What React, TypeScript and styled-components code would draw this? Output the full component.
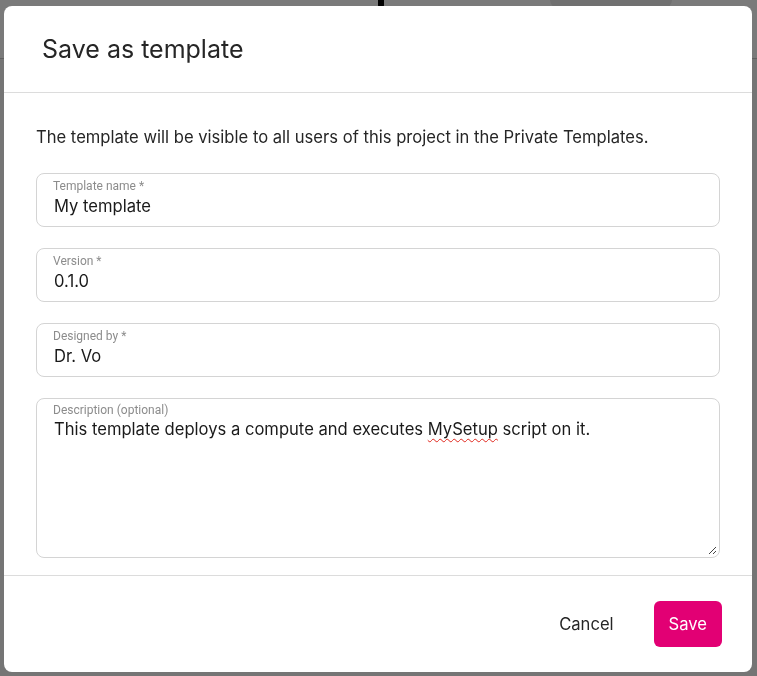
import React from "react";
import styled, { createGlobalStyle } from "styled-components";

const GlobalStyle = createGlobalStyle`
  html, body {
    margin: 0;
    padding: 0;
    height: 100%;
  }
  body {
    font-family: Inter, Roboto, "Liberation Sans", sans-serif;
    background: #fff;
    color: #262626;
  }
`;

const Page = styled.div`
  height: 676px;
  background: #f4f4f4;
`;

const PageHeader = styled.header`
  height: 58px;
  border-bottom: 1px solid #c8c8c8;
  background: #fff;
  display: flex;
  align-items: flex-start;
  padding-left: 378px;
  gap: 166px;
`;

const Glyph = styled.span`
  width: 6px;
  height: 8px;
  border-radius: 0 0 3px 3px;
  background: #000;
`;

const Pill = styled.span`
  width: 122px;
  height: 16px;
  margin-top: -8px;
  border-radius: 8px;
  background: #eaeaea;
`;

const Overlay = styled.div`
  position: fixed;
  inset: 0;
  background: rgba(0, 0, 0, 0.52);
  padding: 6px 5px 4px 4px;
  display: flex;
  align-items: flex-start;
`;

const Dialog = styled.div`
  width: 748px;
  height: 666px;
  background: #fff;
  border-radius: 8px;
  display: flex;
  flex-direction: column;
  overflow: hidden;
`;

const Header = styled.div`
  height: 86px;
  padding: 0 38px;
  display: flex;
  align-items: center;
  border-bottom: 1px solid #dcdcdc;
`;

const Title = styled.h2`
  margin: 0;
  font-size: 25px;
  font-weight: 400;
  color: #262626;
`;

const Body = styled.div`
  padding: 32px 32px 17px;
  display: flex;
  flex-direction: column;
  gap: 21px;
  border-bottom: 1px solid #dcdcdc;
`;

const Intro = styled.p`
  margin: 0 0 3px;
  font-size: 16.6px;
  line-height: 24px;
  color: #262626;
`;

const Field = styled.label<{ $tall?: boolean }>`
  position: relative;
  display: flex;
  flex-direction: column;
  height: ${(p) => (p.$tall ? "160px" : "54px")};
  box-sizing: border-box;
  border: 1px solid #d4d4d4;
  border-radius: 8px;
  padding: ${(p) => (p.$tall ? "3px 16px 0" : "4px 16px 0")};
`;

const Label = styled.span`
  font-family: Roboto, "Liberation Sans", sans-serif;
  font-size: 12px;
  line-height: 16px;
  color: #8c8c8c;
`;

const Input = styled.input`
  border: 0;
  outline: none;
  padding: 0 0 0 1px;
  margin: 0;
  font: inherit;
  font-size: 16.6px;
  line-height: 24px;
  color: #1a1a1a;
  background: transparent;
`;

const TextValue = styled.div`
  padding-left: 1px;
  font-size: 16.6px;
  line-height: 22px;
  color: #1a1a1a;
`;

const Misspelled = styled.span`
  text-decoration: underline wavy #e0281e;
  text-decoration-thickness: 1px;
  text-underline-offset: 3px;
`;

const Grip = styled.svg`
  position: absolute;
  right: 2px;
  bottom: 2px;
`;

const Footer = styled.div`
  flex: 1;
  display: flex;
  align-items: center;
  justify-content: flex-end;
  padding-right: 30px;
  gap: 22px;
`;

const Button = styled.button<{ $primary?: boolean }>`
  height: 46px;
  padding: 0 ${(p) => (p.$primary ? "15px" : "18px")};
  border: 0;
  border-radius: 6px;
  font-family: inherit;
  font-size: 16.6px;
  color: ${(p) => (p.$primary ? "#fff" : "#262626")};
  background: ${(p) => (p.$primary ? "#e20074" : "transparent")};
  cursor: pointer;
`;

export default function App() {
  return (
    <>
      <GlobalStyle />
      <Page>
        <PageHeader>
          <Glyph />
          <Pill />
        </PageHeader>
      </Page>
      <Overlay>
        <Dialog>
          <Header>
            <Title>Save as template</Title>
          </Header>
          <Body>
            <Intro>
              The template will be visible to all users of this project in the Private Templates.
            </Intro>
            <Field>
              <Label>Template name *</Label>
              <Input defaultValue="My template" />
            </Field>
            <Field>
              <Label>Version *</Label>
              <Input defaultValue="0.1.0" />
            </Field>
            <Field>
              <Label>Designed by *</Label>
              <Input defaultValue="Dr. Vo" />
            </Field>
            <Field $tall>
              <Label>Description (optional)</Label>
              <TextValue>
                This template deploys a compute and executes <Misspelled>MySetup</Misspelled> script on it.
              </TextValue>
              <Grip width="9" height="9" viewBox="0 0 9 9">
                <path d="M8 1 L1 8 M8 5 L5 8" stroke="#444" strokeWidth="1" fill="none" />
              </Grip>
            </Field>
          </Body>
          <Footer>
            <Button>Cancel</Button>
            <Button $primary>Save</Button>
          </Footer>
        </Dialog>
      </Overlay>
    </>
  );
}
